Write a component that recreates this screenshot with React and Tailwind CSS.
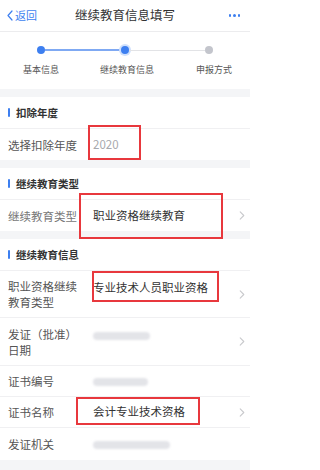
import React from 'react';

const font = { fontFamily: '"Noto Sans CJK SC", "Noto Sans", sans-serif' };

function Chevron() {
  return (
    <svg className="w-[6px] h-[9px] shrink-0" viewBox="0 0 6 10" fill="none">
      <path d="M1 1l4 4-4 4" stroke="#c8c9cc" strokeWidth="1.2" strokeLinecap="round" strokeLinejoin="round" />
    </svg>
  );
}

function SectionTitle({ children }) {
  return (
    <div className="flex items-center h-[32px] pl-[8px] border-b border-[#f0f0f2]">
      <span className="w-[2px] h-[9px] bg-[#3d7ff0] rounded-sm mr-[6px]" />
      <span className="text-[10.5px] font-bold text-[#333]">{children}</span>
    </div>
  );
}

function Row({ label, children, arrow, box, height = 'h-[31px]', labelColor = 'text-[#555]', last }) {
  return (
    <div className={`relative flex items-center ${height} pl-[8px] pr-[5px] ${last ? '' : 'border-b border-[#f0f0f2]'}`}>
      <div className={`w-[85px] shrink-0 text-[11.5px] leading-[16px] ${labelColor}`}>{label}</div>
      <div className="flex-1 min-w-0 text-[11.5px] text-[#333] whitespace-nowrap">{children}</div>
      {arrow && <Chevron />}
      {box}
    </div>
  );
}

function Blur({ w }) {
  return <span className={`inline-block h-[8px] ${w} bg-[#e3e4e8] blur-[1px] rounded-sm align-middle`} />;
}

export default function App() {
  return (
    <div className="w-[250px] h-[470px] bg-[#f4f5f7] overflow-hidden flex flex-col" style={font}>
      <div className="h-[32px] bg-white flex items-center px-[7px] border-b border-[#ececee]">
        <div className="flex items-center w-[40px] text-[#3d7ff0] text-[11px]">
          <svg className="w-[6px] h-[11px] mr-[2px]" viewBox="0 0 6 11" fill="none">
            <path d="M5 1L1 5.5 5 10" stroke="#3d7ff0" strokeWidth="1.2" strokeLinecap="round" strokeLinejoin="round" />
          </svg>
          返回
        </div>
        <div className="flex-1 text-center text-[12.5px] text-[#333]">继续教育信息填写</div>
        <div className="w-[40px] flex justify-end gap-[2px] pr-[3px]">
          <span className="w-[2.5px] h-[2.5px] rounded-full bg-[#3d7ff0]" />
          <span className="w-[2.5px] h-[2.5px] rounded-full bg-[#3d7ff0]" />
          <span className="w-[2.5px] h-[2.5px] rounded-full bg-[#3d7ff0]" />
        </div>
      </div>

      <div className="bg-white h-[57px] pt-[12px]">
        <div className="flex items-center px-[37px] h-[12px]">
          <span className="w-[8px] h-[8px] rounded-full bg-[#3d7ff0] shrink-0" />
          <span className="flex-1 h-[1.5px] bg-[#7fa9f3]" />
          <span className="w-[12px] h-[12px] rounded-full bg-[#cfe0fc] flex items-center justify-center shrink-0 -mx-[2px]">
            <span className="w-[8px] h-[8px] rounded-full bg-[#3d7ff0]" />
          </span>
          <span className="flex-1 h-[1px] bg-[#e2e3e6]" />
          <span className="w-[8px] h-[8px] rounded-full bg-[#c3c5cc] shrink-0" />
        </div>
        <div className="flex mt-[7px] text-[9px] text-[#555]">
          <span className="w-[72px] ml-[5px] text-center">基本信息</span>
          <span className="w-[72px] ml-[14px] text-center">继续教育信息</span>
          <span className="w-[72px] ml-[15px] text-center">申报方式</span>
        </div>
      </div>

      <div className="mt-[8px] bg-white">
        <SectionTitle>扣除年度</SectionTitle>
        <Row
          label="选择扣除年度"
          last
          box={<span className="absolute left-[88px] top-[-4px] w-[53px] h-[35px] border-2 border-[#e8383d]" />}
        >
          <span className="text-[#a8a9ad]">2020</span>
        </Row>
      </div>

      <div className="mt-[8px] bg-white">
        <SectionTitle>继续教育类型</SectionTitle>
        <Row
          label="继续教育类型"
          labelColor="text-[#777]"
          arrow
          last
          box={<span className="absolute left-[79px] top-[-7px] w-[144px] h-[46px] border-2 border-[#e8383d]" />}
        >
          职业资格继续教育
        </Row>
      </div>

      <div className="mt-[8px] bg-white">
        <SectionTitle>继续教育信息</SectionTitle>
        <Row
          label={<>职业资格继续<br />教育类型</>}
          height="h-[47px]"
          arrow
          box={<span className="absolute left-[92px] top-0 w-[127px] h-[31px] border-2 border-[#e8383d]" />}
        >
          <span className="relative top-[-6px]">专业技术人员职业资格</span>
        </Row>
        <Row label={<>发证（批准）<br />日期</>} height="h-[48px]" arrow>
          <span className="relative top-[-7px]"><Blur w="w-[57px]" /></span>
        </Row>
        <Row label="证书编号">
          <Blur w="w-[55px]" />
        </Row>
        <Row
          label="证书名称"
          arrow
          box={<span className="absolute left-[76px] top-0 w-[124px] h-[28px] border-2 border-[#e8383d]" />}
        >
          会计专业技术资格
        </Row>
        <Row label="发证机关" last height="h-[32px]">
          <Blur w="w-[77px]" />
        </Row>
      </div>
    </div>
  );
}
